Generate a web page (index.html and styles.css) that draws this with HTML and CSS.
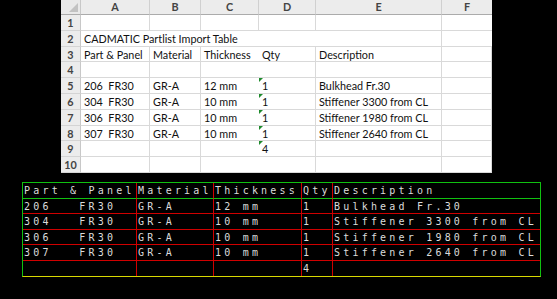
FILE: index.html
```html
<!DOCTYPE html>
<html lang="en">
<head>
    <meta charset="UTF-8">
    <title>CADMATIC Partlist Import</title>
    <link rel="stylesheet" href="styles.css">
</head>
<body>
    <!-- Excel source table -->
    <div class="sheet">
        <div class="corner"></div>
        <div class="col-head">A</div>
        <div class="col-head">B</div>
        <div class="col-head">C</div>
        <div class="col-head">D</div>
        <div class="col-head">E</div>
        <div class="col-head last">F</div>

        <div class="row-head">1</div>
        <div class="cell"></div><div class="cell"></div><div class="cell"></div><div class="cell"></div><div class="cell"></div><div class="cell"></div>

        <div class="row-head">2</div>
        <div class="cell title">CADMATIC Partlist Import Table</div><div class="cell"></div>

        <div class="row-head">3</div>
        <div class="cell">Part &amp; Panel</div><div class="cell">Material</div><div class="cell">Thickness</div><div class="cell">Qty</div><div class="cell">Description</div><div class="cell"></div>

        <div class="row-head">4</div>
        <div class="cell"></div><div class="cell"></div><div class="cell"></div><div class="cell"></div><div class="cell"></div><div class="cell"></div>

        <div class="row-head">5</div>
        <div class="cell">206&nbsp; FR30</div><div class="cell">GR-A</div><div class="cell">12 mm</div><div class="cell num">1</div><div class="cell">Bulkhead Fr.30</div><div class="cell"></div>

        <div class="row-head">6</div>
        <div class="cell">304&nbsp; FR30</div><div class="cell">GR-A</div><div class="cell">10 mm</div><div class="cell num">1</div><div class="cell">Stiffener 3300 from CL</div><div class="cell"></div>

        <div class="row-head">7</div>
        <div class="cell">306&nbsp; FR30</div><div class="cell">GR-A</div><div class="cell">10 mm</div><div class="cell num">1</div><div class="cell">Stiffener 1980 from CL</div><div class="cell"></div>

        <div class="row-head">8</div>
        <div class="cell">307&nbsp; FR30</div><div class="cell">GR-A</div><div class="cell">10 mm</div><div class="cell num">1</div><div class="cell">Stiffener 2640 from CL</div><div class="cell"></div>

        <div class="row-head">9</div>
        <div class="cell"></div><div class="cell"></div><div class="cell"></div><div class="cell num">4</div><div class="cell"></div><div class="cell"></div>

        <div class="row-head">10</div>
        <div class="cell"></div><div class="cell"></div><div class="cell"></div><div class="cell"></div><div class="cell"></div><div class="cell"></div>
    </div>

    <!-- CAD drawing table -->
    <div class="cad">
        <div class="cad-head">Part &amp; Panel</div>
        <div class="cad-head">Material</div>
        <div class="cad-head">Thickness</div>
        <div class="cad-head">Qty</div>
        <div class="cad-head end">Description</div>

        <div class="cad-cell">206&nbsp;&nbsp;&nbsp;FR30</div>
        <div class="cad-cell">GR-A</div>
        <div class="cad-cell">12 mm</div>
        <div class="cad-cell">1</div>
        <div class="cad-cell end">Bulkhead Fr.30</div>

        <div class="cad-cell">304&nbsp;&nbsp;&nbsp;FR30</div>
        <div class="cad-cell">GR-A</div>
        <div class="cad-cell">10 mm</div>
        <div class="cad-cell">1</div>
        <div class="cad-cell end">Stiffener 3300 from CL</div>

        <div class="cad-cell">306&nbsp;&nbsp;&nbsp;FR30</div>
        <div class="cad-cell">GR-A</div>
        <div class="cad-cell">10 mm</div>
        <div class="cad-cell">1</div>
        <div class="cad-cell end">Stiffener 1980 from CL</div>

        <div class="cad-cell">307&nbsp;&nbsp;&nbsp;FR30</div>
        <div class="cad-cell">GR-A</div>
        <div class="cad-cell">10 mm</div>
        <div class="cad-cell">1</div>
        <div class="cad-cell end">Stiffener 2640 from CL</div>

        <div class="cad-cell bottom"></div>
        <div class="cad-cell bottom"></div>
        <div class="cad-cell bottom"></div>
        <div class="cad-cell bottom">4</div>
        <div class="cad-cell bottom end"></div>
    </div>
</body>
</html>
```

FILE: styles.css
```css
* {
    margin: 0;
    padding: 0;
    box-sizing: border-box;
}

body {
    background: #000;
    width: 557px;
    height: 299px;
    overflow: hidden;
}

/* ---- spreadsheet ---- */

.sheet {
    margin-left: 61px;
    width: 431px;
    display: grid;
    grid-template-columns: 20px 69px 51px 58px 57px 126px 50px;
    grid-template-rows: 15px repeat(10, 15.8px);
    background: #fff;
    font-family: Lato, "Open Sans", sans-serif;
    font-size: 10.8px;
    color: #111;
}

.corner {
    background: #e9e9e9;
    border-right: 1px solid #c8c8c8;
    border-bottom: 1px solid #ababab;
    position: relative;
}

.corner::after {
    content: "";
    position: absolute;
    right: 2px;
    bottom: 2px;
    border-left: 9px solid transparent;
    border-bottom: 9px solid #c2c2c2;
}

.col-head {
    background: #ececec;
    border-right: 1px solid #d0d0d0;
    border-bottom: 1px solid #ababab;
    text-align: center;
    font-weight: bold;
    color: #444;
    line-height: 14px;
}

.col-head.last {
    border-right: none;
}

.row-head {
    background: #ececec;
    border-right: 1px solid #c8c8c8;
    border-bottom: 1px solid #d4d4d4;
    text-align: center;
    font-weight: bold;
    color: #444;
    line-height: 15px;
}

.cell {
    border-right: 1px solid #d9d9d9;
    border-bottom: 1px solid #d9d9d9;
    padding-left: 3px;
    line-height: 15px;
    white-space: nowrap;
    position: relative;
}

.cell:nth-child(7n) {
    border-right: none;
}

.cell.title {
    grid-column: span 5;
}

.cell.title + .cell {
    border-right: none;
}

.cell.num::before {
    content: "";
    position: absolute;
    left: 0;
    top: 0;
    border-top: 4px solid #1e8a2c;
    border-right: 4px solid transparent;
}

/* ---- CAD table ---- */

.cad {
    margin: 9px 0 0 22px;
    width: 519px;
    display: grid;
    grid-template-columns: 114px 77px 88px 31px minmax(0, 1fr);
    grid-template-rows: 16px repeat(5, 15.4px);
    border: 1px solid #10c010;
    border-bottom-color: #d8d800;
    font-family: "DejaVu Sans Mono", monospace;
    font-size: 10px;
    letter-spacing: 3.2px;
    color: #dcdcdc;
}

.cad-head,
.cad-cell {
    border-right: 1px solid #d00000;
    padding-left: 1px;
    line-height: 15px;
    white-space: nowrap;
    overflow: hidden;
}

.cad-head {
    border-bottom: 1px solid #10c010;
}

.cad-cell {
    border-bottom: 1px solid #d00000;
}

.cad-cell.bottom {
    border-bottom: none;
}

.cad-head.end,
.cad-cell.end {
    border-right: none;
}
```
